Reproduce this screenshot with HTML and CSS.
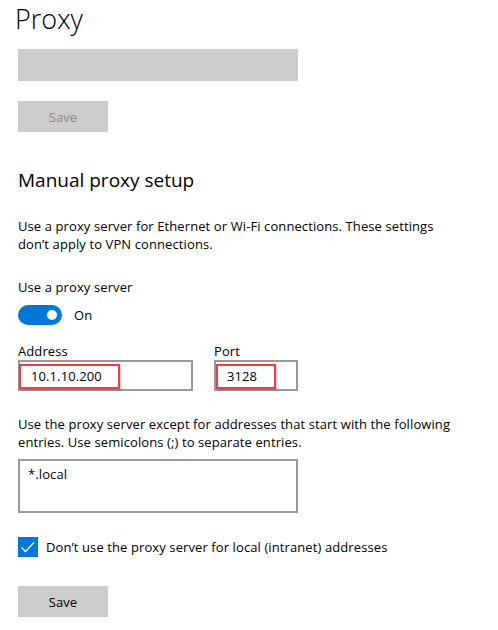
FILE: index.html
```html
<!DOCTYPE html>
<html lang="en">
<head>
<meta charset="utf-8">
<title>Proxy</title>
<link rel="stylesheet" href="styles.css">
</head>
<body>
<main class="page">
  <h1 class="title">Proxy</h1>
  <div class="bar"></div>
  <button class="btn btn-disabled top-save" type="button">Save</button>

  <h2 class="heading">Manual proxy setup</h2>
  <p class="para">Use a proxy server for Ethernet or Wi-Fi connections. These settings don’t apply to VPN connections.</p>

  <div class="label use-label">Use a proxy server</div>
  <div class="toggle-row">
    <span class="toggle"><span class="knob"></span></span>
    <span class="toggle-text">On</span>
  </div>

  <div class="fields">
    <div class="field field-address">
      <div class="label field-label">Address</div>
      <div class="input">
        <span class="input-text">10.1.10.200</span>
        <span class="highlight hl-address"></span>
      </div>
    </div>
    <div class="field field-port">
      <div class="label field-label">Port</div>
      <div class="input">
        <span class="input-text">3128</span>
        <span class="highlight hl-port"></span>
      </div>
    </div>
  </div>

  <p class="para para-except">Use the proxy server except for addresses that start with the following entries. Use semicolons (;) to separate entries.</p>
  <div class="textarea">*.local</div>

  <div class="check-row">
    <span class="checkbox">
      <svg width="20" height="20" viewBox="0 0 20 20" aria-hidden="true"><polyline points="3.5,10.5 7.5,14.5 16,5.5" fill="none" stroke="#fff" stroke-width="1.3"/></svg>
    </span>
    <span class="check-text">Don’t use the proxy server for local (intranet) addresses</span>
  </div>

  <button class="btn bottom-save" type="button">Save</button>
</main>
</body>
</html>
```
FILE: styles.css
```css
html, body {
  margin: 0;
  padding: 0;
  background: #fff;
}
body {
  font-family: "Open Sans", "Noto Sans", sans-serif;
  color: #000;
  font-size: 13px;
  letter-spacing: 0.1px;
}
.page {
  padding: 0 18px;
  display: flex;
  flex-direction: column;
  align-items: flex-start;
}
.title {
  margin: 0 0 0 -3px;
  font-size: 27px;
  font-weight: 300;
  line-height: 37px;
  letter-spacing: 0;
}
.bar {
  margin-top: 12px;
  width: 280px;
  height: 32px;
  background: #cccccc;
}
.btn {
  font-family: inherit;
  font-size: 13px;
  letter-spacing: 0.1px;
  width: 90px;
  height: 31px;
  border: 0;
  padding: 0;
  background: #cccccc;
  color: #000;
}
.btn-disabled {
  color: #8a8a8a;
}
.top-save {
  margin-top: 20px;
}
.heading {
  margin: 34px 0 0;
  font-size: 19px;
  font-weight: 400;
  line-height: 28px;
  letter-spacing: 0;
}
.para {
  margin: 23px 0 0;
  line-height: 18px;
  max-width: 450px;
}
.label {
  line-height: 18px;
}
.use-label {
  margin-top: 25px;
}
.toggle-row {
  margin-top: 9px;
  display: flex;
  align-items: center;
  gap: 12px;
  height: 20px;
}
.toggle {
  width: 44px;
  height: 20px;
  border-radius: 10px;
  background: #0078d7;
  display: flex;
  align-items: center;
  justify-content: flex-end;
  padding-right: 5px;
  box-sizing: border-box;
}
.knob {
  width: 10px;
  height: 10px;
  border-radius: 50%;
  background: #fff;
}
.fields {
  margin-top: 18px;
  display: flex;
  gap: 21px;
}
.field-label {
  line-height: 17px;
}
.input {
  position: relative;
  height: 31px;
  border: 2px solid #999999;
  box-sizing: border-box;
  display: flex;
  align-items: center;
  padding-left: 11px;
}
.field-address .input {
  width: 175px;
}
.field-port .input {
  width: 84px;
}
.highlight {
  position: absolute;
  top: 2px;
  left: -1px;
  height: 25px;
  border: 2px solid #ea3f45;
  box-sizing: border-box;
  box-shadow: 1px 1px 2px rgba(0,0,0,0.25);
}
.hl-address {
  width: 101px;
}
.hl-port {
  left: 0;
  width: 60px;
}
.para-except {
  margin-top: 24px;
}
.textarea {
  margin-top: 8px;
  width: 280px;
  height: 54px;
  border: 2px solid #999999;
  box-sizing: border-box;
  padding: 4px 0 0 8px;
  line-height: 18px;
}
.check-row {
  margin-top: 24px;
  display: flex;
  align-items: center;
  gap: 8px;
}
.checkbox {
  width: 20px;
  height: 20px;
  background: #0078d7;
  display: block;
}
.checkbox svg {
  display: block;
}
.bottom-save {
  margin-top: 29px;
}
```
